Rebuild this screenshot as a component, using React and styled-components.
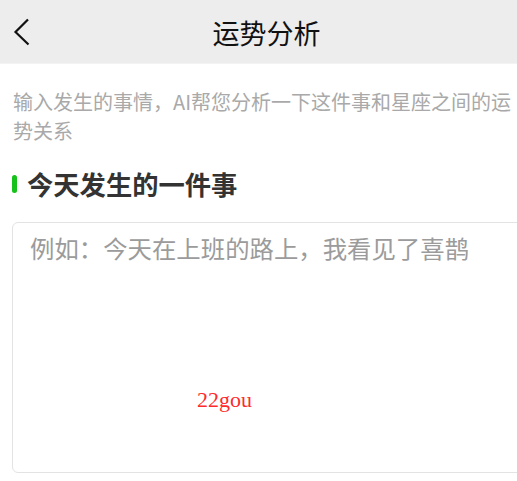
import React from "react";
import styled, {createGlobalStyle} from "styled-components";

const GlobalStyle = createGlobalStyle`
  html, body {
    margin: 0;
    padding: 0;
    background: #ffffff;
    overflow-x: hidden;
  }

  body {
    font-family: "Noto Sans CJK SC", "Noto Sans", sans-serif;
  }
`;

const StyledPage = styled.div`
  width: 517px;
  min-height: 481px;
  overflow: hidden;
`;

const StyledHeader = styled.header`
  height: 64px;
  display: grid;
  grid-template-columns: 48px 1fr 32px;
  align-items: center;
  background: #ededed;
  border-bottom: 1px solid #f3f3f3;
  box-sizing: border-box;
`;

const StyledBack = styled.button`
  display: flex;
  align-items: center;
  justify-content: flex-start;
  padding: 0 0 0 13px;
  height: 64px;
  border: none;
  background: transparent;
  cursor: pointer;
`;

const StyledTitle = styled.h1`
  margin: 0;
  text-align: center;
  font-size: 27px;
  font-weight: 400;
  line-height: 1;
  color: #111111;
`;

const StyledContent = styled.main`
  padding: 23px 0 0 13px;
`;

const StyledIntro = styled.p`
  margin: 0;
  font-size: 20px;
  line-height: 29px;
  color: #a9a9a9;
`;

const StyledSection = styled.h2`
  display: flex;
  align-items: center;
  gap: 10px;
  margin: 24px 0 0 -1px;
  font-size: 26.3px;
  font-weight: 700;
  line-height: 30px;
  color: #333333;

  &::before {
    content: "";
    width: 5px;
    height: 18px;
    border-radius: 3px;
    background: #16c21a;
  }
`;

const StyledField = styled.div`
  position: relative;
  margin: 23px -6px 0 -1px;
`;

const StyledTextarea = styled.textarea`
  display: block;
  width: 100%;
  height: 251px;
  box-sizing: border-box;
  padding: 8px 17px;
  border: 1px solid #e3e3e3;
  border-radius: 6px;
  resize: none;
  font-family: "Noto Sans CJK SC", "Noto Sans", sans-serif;
  font-size: 24.4px;
  line-height: 34px;
  color: #333333;
  background: #ffffff;

  &::placeholder {
    color: #9b9b9b;
  }

  &:focus {
    outline: none;
  }
`;

const StyledMark = styled.span`
  position: absolute;
  left: 185px;
  top: 167px;
  font-family: "Liberation Serif", serif;
  font-size: 22px;
  line-height: 1;
  color: #ff2b2b;
  pointer-events: none;
`;

const BackIcon = () => (
  <svg width="18" height="28" viewBox="0 0 18 28" fill="none">
    <path d="M15 1.5L2.5 14L15.5 26.5" stroke="#111111" strokeWidth="2.2" />
  </svg>
);

const App = () => (
  <StyledPage>
    <GlobalStyle />
    <StyledHeader>
      <StyledBack aria-label="返回">
        <BackIcon />
      </StyledBack>
      <StyledTitle>运势分析</StyledTitle>
      <span />
    </StyledHeader>
    <StyledContent>
      <StyledIntro>
        输入发生的事情，AI帮您分析一下这件事和星座之间的运势关系
      </StyledIntro>
      <StyledSection>今天发生的一件事</StyledSection>
      <StyledField>
        <StyledTextarea placeholder="例如：今天在上班的路上，我看见了喜鹊" />
        <StyledMark>22gou</StyledMark>
      </StyledField>
    </StyledContent>
  </StyledPage>
);

export default App;
